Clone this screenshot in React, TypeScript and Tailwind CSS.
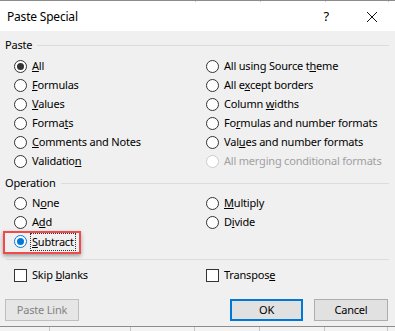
import React from 'react';

const font = { fontFamily: '"Noto Sans", "Liberation Sans", sans-serif' };

type RadioProps = {
  label: React.ReactNode;
  checked?: boolean;
  focused?: boolean;
  disabled?: boolean;
};

const Radio = ({ label, checked, focused, disabled }: RadioProps) => (
  <div className="flex h-[19px] items-center whitespace-nowrap">
    <span
      className={`flex h-[13px] w-[13px] shrink-0 items-center justify-center rounded-full border bg-white ${
        disabled ? 'border-[#cccccc]' : focused ? 'border-[#0078d7]' : 'border-[#333333]'
      }`}
    >
      {checked && (
        <span className={`h-[7px] w-[7px] rounded-full ${focused ? 'bg-[#0078d7]' : 'bg-[#333333]'}`} />
      )}
    </span>
    {focused ? (
      <span className="ml-[4px] px-[1px] leading-[16px] text-black outline-1 outline-dotted outline-[#333]">{label}</span>
    ) : (
      <span className={`ml-[5px] ${disabled ? 'text-[#a0a0a0]' : 'text-black'}`}>{label}</span>
    )}
  </div>
);

const Check = ({ label }: { label: React.ReactNode }) => (
  <div className="flex h-[19px] items-center whitespace-nowrap">
    <span className="h-[13px] w-[13px] shrink-0 border border-[#333333] bg-white" />
    <span className="ml-[5px] text-black">{label}</span>
  </div>
);

const GroupHeader = ({ title }: { title: string }) => (
  <div className="flex h-[19px] items-center pl-[5px] pr-[6px]">
    <span className="text-black">{title}</span>
    <span className="ml-[5px] h-[1px] flex-1 bg-[#dcdcdc]" />
  </div>
);

const Grid = () => (
  <div className="flex h-[5px] w-full border-t border-[#8c8c8c] bg-[#f3f3f3]">
    <span className="w-[50px] border-r border-[#c6c6c6]" />
    <span className="w-[81px] border-r border-[#c6c6c6]" />
    <span className="w-[64px] border-r border-[#c6c6c6]" />
    <span className="w-[65px] border-r border-[#c6c6c6]" />
    <span className="w-[65px] border-r border-[#c6c6c6]" />
    <span className="w-[63px] border-r border-[#c6c6c6]" />
  </div>
);

export default function App() {
  return (
    <div
      className="flex h-[331px] w-[395px] flex-col overflow-hidden bg-[#f0f0f0] text-[11px] tracking-[-0.2px]"
      style={font}
    >
      {/* spreadsheet edge behind the dialog */}
      <div className="flex h-[2px] w-full border-t border-[#8c8c8c] bg-white">
        <span className="w-[196px] border-r border-[#c6c6c6]" />
        <span className="w-[65px] border-r border-[#c6c6c6]" />
        <span className="w-[65px] border-r border-[#c6c6c6]" />
        <span className="w-[63px] border-r border-[#c6c6c6]" />
      </div>

      {/* title bar */}
      <div className="flex h-[29px] items-center bg-white pl-[7px] text-black">
        <span className="text-[12px]">Paste Special</span>
        <span className="ml-auto mr-[37px] text-[13px]">?</span>
        <svg width="12" height="12" viewBox="0 0 12 12" className="mr-[17px]">
          <path d="M1 1L11 11M11 1L1 11" stroke="#111" strokeWidth="1" />
        </svg>
      </div>

      {/* body */}
      <div className="flex flex-1 flex-col">
        <div className="mt-[5px]">
          <GroupHeader title="Paste" />
        </div>
        <div className="mt-[2px] grid grid-cols-[192px_1fr]">
          <div className="flex flex-col pl-[14px]">
            <Radio checked label={<><u>A</u>ll</>} />
            <Radio label={<><u>F</u>ormulas</>} />
            <Radio label={<><u>V</u>alues</>} />
            <Radio label={<>Forma<u>t</u>s</>} />
            <Radio label={<><u>C</u>omments and Notes</>} />
            <Radio label={<>Validatio<u>n</u></>} />
          </div>
          <div className="flex flex-col pl-[14px]">
            <Radio label={<>All using Source t<u>h</u>eme</>} />
            <Radio label={<>All e<u>x</u>cept borders</>} />
            <Radio label={<>Column <u>w</u>idths</>} />
            <Radio label={<>Fo<u>r</u>mulas and number formats</>} />
            <Radio label={<>Val<u>u</u>es and number formats</>} />
            <Radio disabled label="All merging conditional formats" />
          </div>
        </div>

        <div className="mt-[3px]">
          <GroupHeader title="Operation" />
        </div>
        <div className="mt-[1px] grid grid-cols-[192px_1fr]">
          <div className="flex flex-col pl-[14px]">
            <Radio label={<>N<u>o</u>ne</>} />
            <Radio label={<>A<u>d</u>d</>} />
            <div className="relative">
              <Radio checked focused label={<><u>S</u>ubtract</>} />
              <span className="pointer-events-none absolute left-[-11px] top-[-1px] h-[23px] w-[78px] border-2 border-[#f04b4b] shadow-[0_2px_4px_rgba(0,0,0,0.35)]" />
            </div>
          </div>
          <div className="flex flex-col pl-[14px]">
            <Radio label={<><u>M</u>ultiply</>} />
            <Radio label={<>D<u>i</u>vide</>} />
          </div>
        </div>

        <div className="mx-[6px] mt-[8px] h-[1px] bg-[#dcdcdc]" />

        <div className="mt-[6px] grid grid-cols-[192px_1fr]">
          <div className="pl-[14px]">
            <Check label={<>Skip <u>b</u>lanks</>} />
          </div>
          <div className="pl-[14px]">
            <Check label={<>Transpos<u>e</u></>} />
          </div>
        </div>

        <div className="mt-[14px] flex items-center px-[5px]">
          <button className="flex h-[22px] w-[74px] items-center justify-center border border-[#bfbfbf] bg-[#e6e6e6] text-[#838383]">
            Paste Link
          </button>
          <button className="ml-auto flex h-[22px] w-[73px] items-center justify-center border-2 border-[#0078d7] bg-[#e1e1e1] text-black">
            OK
          </button>
          <button className="ml-[11px] mr-[2px] flex h-[22px] w-[74px] items-center justify-center border border-[#adadad] bg-[#e1e1e1] text-black">
            Cancel
          </button>
        </div>
      </div>

      <Grid />
    </div>
  );
}
